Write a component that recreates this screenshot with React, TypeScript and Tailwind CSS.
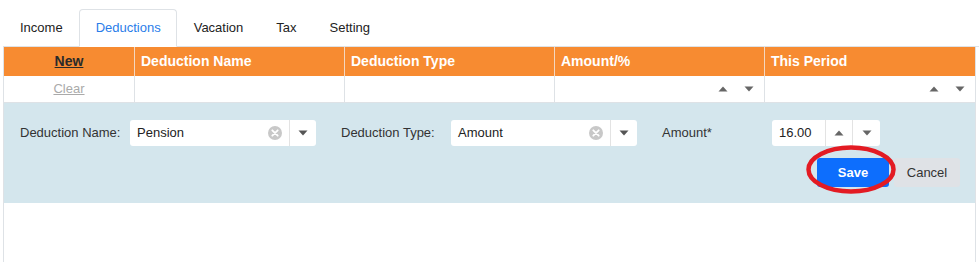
import React from "react";

const Up = ({ c = "#666" }: { c?: string }) => (
  <svg width="10" height="6" viewBox="0 0 10 6"><path d="M5 0.5 L9.5 5.5 L0.5 5.5 Z" fill={c} /></svg>
);
const Down = ({ c = "#666" }: { c?: string }) => (
  <svg width="10" height="6" viewBox="0 0 10 6"><path d="M0.5 0.5 L9.5 0.5 L5 5.5 Z" fill={c} /></svg>
);

const ClearIcon = () => (
  <svg width="14" height="14" viewBox="0 0 14 14">
    <circle cx="7" cy="7" r="7" fill="#c8c8c8" />
    <path d="M4.3 4.3 L9.7 9.7 M9.7 4.3 L4.3 9.7" stroke="#fff" strokeWidth="1.8" strokeLinecap="round" />
  </svg>
);

function Combo({ value }: { value: string }) {
  return (
    <div className="w-[186px] h-[26px] bg-white rounded-[3px] flex items-center">
      <div className="flex-1 pl-[7px] text-[#222]">{value}</div>
      <div className="mr-[7px] flex items-center"><ClearIcon /></div>
      <div className="w-px h-full bg-[#e3e3e3]" />
      <div className="w-[26px] flex items-center justify-center"><Down c="#555" /></div>
    </div>
  );
}

export default function App() {
  const tabs = ["Income", "Deductions", "Vacation", "Tax", "Setting"];
  return (
    <div
      className="w-[979px] h-[262px] bg-white overflow-hidden relative flex flex-col text-[13px] text-[#333]"
      style={{ fontFamily: '"Liberation Sans", Arial, sans-serif' }}
    >
      <div className="pt-[9px] pl-[3px]">
        <ul className="flex border-b border-[#dee2e6] h-[38px]">
          {tabs.map((t) => {
            const active = t === "Deductions";
            return (
              <li
                key={t}
                className={
                  "h-[38px] -mb-px pl-4 pr-[15px] flex items-center border rounded-t-[4px] " +
                  (active
                    ? "border-[#dee2e6] border-b-white text-[#2a7de9] bg-white"
                    : "border-transparent text-[#222]")
                }
              >
                {t}
              </li>
            );
          })}
        </ul>
      </div>
      <div className="ml-[3px] w-[973px] flex-1 border-x border-[#dee2e6] flex flex-col">
        <div className="grid grid-cols-[131px_210px_210px_210px_210px] h-[29px] bg-[#f78b31] font-bold text-white text-[14px]">
          <div className="border-r border-[#f3d7c0] flex items-center justify-center">
            <span className="underline text-[#2a2a2a]">New</span>
          </div>
          <div className="border-r border-[#f3d7c0] flex items-center pl-[6px]">Deduction Name</div>
          <div className="border-r border-[#f3d7c0] flex items-center pl-[6px]">Deduction Type</div>
          <div className="border-r border-[#f3d7c0] flex items-center pl-[6px]">Amount/%</div>
          <div className="flex items-center pl-[6px]">This Period</div>
        </div>
        <div className="grid grid-cols-[131px_210px_210px_210px_210px] h-[27px] border-b border-[#dee2e6] bg-white">
          <div className="border-r border-[#dee2e6] flex items-center justify-center">
            <span className="underline text-[#aaa]">Clear</span>
          </div>
          <div className="border-r border-[#dee2e6]" />
          <div className="border-r border-[#dee2e6]" />
          <div className="border-r border-[#dee2e6] flex items-center justify-end pr-[10px] gap-[16px]">
            <Up /><Down />
          </div>
          <div className="flex items-center justify-end pr-[10px] gap-[16px]">
            <Up /><Down />
          </div>
        </div>
        <div className="h-[100px] bg-[#d4e6ed] pt-[17px] pl-[16px] pr-[15px]">
          <div className="flex items-center h-[26px] gap-[25px]">
            <div className="flex items-center">
              <div className="w-[110px]">Deduction Name:</div>
              <Combo value="Pension" />
            </div>
            <div className="flex items-center">
              <div className="w-[110px]">Deduction Type:</div>
              <Combo value="Amount" />
            </div>
            <div className="flex items-center">
              <div className="w-[110px]">Amount*</div>
              <div className="h-[26px] w-[108px] bg-white rounded-[3px] flex items-center">
                <div className="w-[53px] pl-[7px] text-[#222]">16.00</div>
                <div className="w-px h-full bg-[#e3e3e3]" />
                <div className="w-[26px] flex items-center justify-center"><Up /></div>
                <div className="w-px h-full bg-[#e3e3e3]" />
                <div className="flex-1 flex items-center justify-center"><Down /></div>
              </div>
            </div>
          </div>
          <div className="flex justify-end gap-[5px] mt-[12px]">
            <button className="w-[72px] h-[29px] rounded-[3px] bg-[#0d6efd] text-white font-bold">Save</button>
            <button className="w-[66px] h-[29px] rounded-[3px] bg-[#dfe2e6] text-[#333]">Cancel</button>
          </div>
        </div>
        <div className="flex-1 bg-white" />
      </div>
      <svg className="absolute left-[806px] top-[145px]" width="90" height="49" viewBox="0 0 90 49">
        <ellipse cx="45" cy="24.5" rx="42.5" ry="22" fill="none" stroke="#e31b23" strokeWidth="4.5" />
      </svg>
    </div>
  );
}
